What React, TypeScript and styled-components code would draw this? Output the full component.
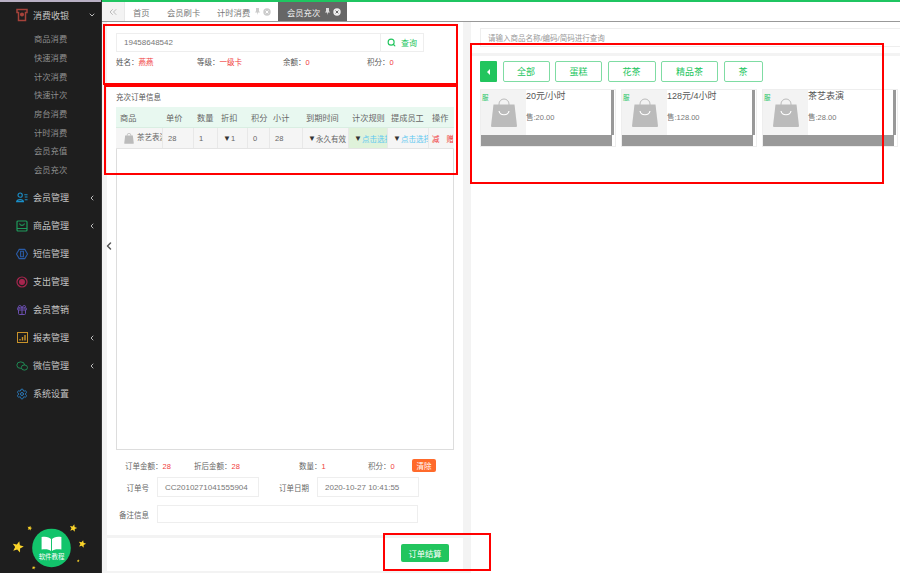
import styled, {createGlobalStyle} from "styled-components";
import {ChevronDown, ChevronLeft, ChevronsLeft, Gift, Search, Settings} from "lucide-react";

const GlobalStyle = createGlobalStyle`
    html, body {
        margin: 0;
        padding: 0;
        background: #fff;
    }

    * {
        box-sizing: border-box;
    }

    body {
        font-family: "Liberation Sans", "Noto Sans CJK SC", sans-serif;
        font-size: 8px;
        color: #555;
    }
`;

const Page = styled.div`
    position: relative;
    width: 900px;
    height: 573px;
    display: flex;
    overflow: hidden;
`;

const Sidebar = styled.aside`
    position: relative;
    width: 102px;
    flex: none;
    background: #1e1e1e;
    border-right: 1px solid #333;
    padding-top: 1px;
    display: flex;
    flex-direction: column;

    &::before {
        content: "";
        position: absolute;
        top: 0;
        left: 0;
        right: 0;
        height: 2px;
        background: #b9b0c4;
    }
`;

const NavRow = styled.div`
    height: 28px;
    flex: none;
    display: flex;
    align-items: center;
    padding-left: 16px;
    color: #c4c4c4;
    font-size: 9px;
    gap: 5px;
`;

const NavIcon = styled.span`
    width: 12px;
    height: 12px;
    flex: none;
    display: flex;
    align-items: center;
    justify-content: center;
`;

const NavLabel = styled.span`
    flex: 1;
`;

const NavArrow = styled.span`
    width: 16px;
    padding-left: 3px;
    display: flex;
    color: #bbb;
`;

const SubList = styled.div`
    display: flex;
    flex-direction: column;
    margin-bottom: 5.4px;
`;

const SubRow = styled.div`
    height: 18.7px;
    display: flex;
    align-items: center;
    padding-left: 34px;
    color: #8f8f8f;
    font-size: 8.3px;
`;

const Tutorial = styled.div`
    margin-top: auto;
    height: 63px;
    display: flex;
    justify-content: center;
`;

const Main = styled.main`
    flex: 1;
    min-width: 0;
    display: flex;
    flex-direction: column;
    border-top: 2px solid #1fc561;
`;

const TabBar = styled.div`
    height: 20px;
    flex: none;
    display: flex;
    align-items: center;
    background: #fff;
    border-bottom: 1px solid #999;
`;

const CollapseTab = styled.div`
    width: 23px;
    height: 100%;
    display: flex;
    align-items: center;
    justify-content: center;
    background: #f3f3f3;
    border-right: 1px solid #e8e8e8;
    color: #bbb;
    margin-right: 8px;
`;

const Tab = styled.div<{ $active?: boolean; $width: number }>`
    width: ${({$width}) => $width}px;
    height: 100%;
    flex: none;
    display: flex;
    align-items: center;
    gap: 3px;
    padding-left: ${({$active}) => ($active ? 9 : 0)}px;
    background: ${({$active}) => ($active ? "#666" : "transparent")};
    color: ${({$active}) => ($active ? "#f2f2f2" : "#777")};
    font-size: 8.3px;
`;

const TabLabel = styled.span`
    margin-right: 2px;
`;

const Content = styled.div`
    flex: 1;
    min-height: 0;
    display: flex;
`;

const LeftPane = styled.section`
    width: 369px;
    flex: none;
    position: relative;
    background: #f3f3f3;
    padding: 0 8px 2px 5px;
    display: flex;
    flex-direction: column;
    gap: 3px;
`;

const LeftCard = styled.div`
    flex: 1;
    min-height: 0;
    background: #fff;
    display: flex;
    flex-direction: column;
    padding: 11px 9px 0;
`;

const MemberSearch = styled.div`
    width: 308px;
    height: 19px;
    flex: none;
    display: flex;
    border: 1px solid #eee;
`;

const SearchText = styled.div`
    flex: 1;
    display: flex;
    align-items: center;
    padding-left: 7px;
    color: #777;
    font-size: 8px;
`;

const SearchButton = styled.div`
    width: 43px;
    display: flex;
    align-items: center;
    justify-content: center;
    gap: 5px;
    border-left: 1px solid #eee;
    color: #22c55e;
    font-size: 8px;
`;

const MemberInfo = styled.div`
    height: 17px;
    flex: none;
    display: grid;
    grid-template-columns: 81px 86px 84px 1fr;
    align-items: center;
    margin-top: 1px;
    font-size: 7.5px;
    color: #555;
`;

const Red = styled.span`
    color: #f03b3b;
`;

const SectionTitle = styled.div`
    margin-top: 18px;
    height: 16px;
    flex: none;
    display: flex;
    align-items: center;
    font-size: 7.5px;
    color: #555;
`;

const TableBox = styled.div`
    width: 338px;
    height: 343px;
    flex: none;
    margin-top: 3px;
    border: 1px solid #ddd;
    border-top: none;
`;

const GridRow = styled.div<{ $head?: boolean }>`
    display: grid;
    grid-template-columns: 46px 31px 24px 30px 22px 33px 46px 39px 41px 25px;
    height: 21px;
    background: ${({$head}) => ($head ? "#e8f8f0" : "#f5f5f5")};
    border-bottom: 1px solid ${({$head}) => ($head ? "#d9eee2" : "#e4e4e4")};
    margin: 0 -1px;
`;

const Cell = styled.div<{ $fill?: string; $head?: boolean }>`
    display: flex;
    align-items: center;
    min-width: 0;
    padding-left: ${({$head}) => ($head ? 4 : 5)}px;
    overflow: hidden;
    white-space: nowrap;
    background: ${({$fill}) => $fill ?? "transparent"};
    border-left: ${({$head}) => ($head ? "none" : "1px solid #e8e8e8")};
    font-size: ${({$head}) => ($head ? 8.2 : 7.5)}px;
    color: #666;
`;

const ProductCell = styled(Cell)`
    border-left: none;
    padding-left: 8px;
    gap: 3px;
    align-items: flex-start;
    padding-top: 3px;
`;

const ActionCell = styled(Cell)`
    padding-left: 3px;
`;

const RowBag = styled.svg`
    flex: none;
    margin-top: 2px;
`;

const Caret = styled.span`
    color: #333;
    font-size: 8px;
`;

const LinkText = styled.span`
    color: #5ec8f0;
`;

const ActionText = styled.span`
    color: #f03b3b;
    margin-right: 7px;
`;

const Totals = styled.div`
    width: 340px;
    height: 17px;
    flex: none;
    margin-top: 7px;
    display: grid;
    grid-template-columns: 69px 105px 69px 44px 1fr;
    padding-left: 9px;
    align-items: center;
    font-size: 7.5px;
    color: #666;
`;

const ClearButton = styled.span`
    width: 24px;
    height: 13px;
    display: flex;
    align-items: center;
    justify-content: center;
    background: #ff6a2b;
    color: #fff;
    border-radius: 2px;
    font-size: 7.5px;
`;

const FormRow = styled.div<{ $gap: number }>`
    flex: none;
    display: flex;
    align-items: center;
    margin-top: ${({$gap}) => $gap}px;
`;

const FormLabel = styled.span<{ $width: number }>`
    width: ${({$width}) => $width}px;
    flex: none;
    padding-right: 8px;
    text-align: right;
    font-size: 7.5px;
    color: #666;
`;

const FormInput = styled.div<{ $width: number; $height: number }>`
    width: ${({$width}) => $width}px;
    height: ${({$height}) => $height}px;
    flex: none;
    display: flex;
    align-items: center;
    padding-left: 7px;
    border: 1px solid #eee;
    font-size: 8px;
    color: #777;
`;

const FooterCard = styled.div`
    height: 33px;
    flex: none;
    background: #fff;
    display: flex;
    justify-content: flex-end;
    padding: 6px 14px 0 0;
`;

const SubmitButton = styled.div`
    width: 48px;
    height: 18px;
    display: flex;
    align-items: center;
    justify-content: center;
    background: #22c55e;
    color: #fff;
    border-radius: 2px;
    font-size: 8.3px;
`;

const SideHandle = styled.div`
    position: absolute;
    left: 1px;
    top: 218px;
    display: flex;
    color: #555;
`;

const RightPane = styled.section`
    flex: 1;
    min-width: 0;
    background: #fff;
    display: flex;
    flex-direction: column;
`;

const ProductSearchWrap = styled.div`
    height: 34px;
    flex: none;
    padding: 6px 0 0 9px;
    border-bottom: 3px solid #f3f3f3;
`;

const ProductSearch = styled.div`
    height: 19px;
    display: flex;
    align-items: center;
    padding-left: 7px;
    border: 1px solid #eee;
    border-right: none;
    color: #999;
    font-size: 7.5px;
`;

const CategoryBar = styled.div`
    height: 21px;
    flex: none;
    display: flex;
    gap: 5.5px;
    margin: 5px 0 7px 9px;
`;

const CategoryToggle = styled.div`
    width: 17px;
    display: flex;
    align-items: center;
    justify-content: center;
    background: #22c55e;
    border-radius: 1px;
`;

const Triangle = styled.span`
    border: 3px solid transparent;
    border-right-color: #fff;
    margin-left: -3px;
`;

const CategoryButton = styled.div<{ $width: number }>`
    width: ${({$width}) => $width}px;
    display: flex;
    align-items: center;
    justify-content: center;
    border: 1px solid #7fdca3;
    border-radius: 2px;
    color: #22c55e;
    font-size: 9px;
`;

const ProductGrid = styled.div`
    display: flex;
    gap: 5px;
    margin-left: 9px;
`;

const ProductCard = styled.div`
    width: 136px;
    height: 58px;
    flex: none;
    position: relative;
    display: flex;
    flex-direction: column;
    border: 1px solid #eee;
`;

const ProductBody = styled.div`
    height: 45px;
    flex: none;
    display: flex;
`;

const ProductImage = styled.div`
    width: 45px;
    flex: none;
    display: flex;
    align-items: center;
    justify-content: center;
    background: #f3f3f3;
`;

const ProductText = styled.div`
    flex: 1;
`;

const ProductName = styled.div`
    height: 13px;
    margin-bottom: 8px;
    font-size: 9px;
    line-height: 13px;
    color: #555;
`;

const ProductPrice = styled.div`
    font-size: 7.5px;
    line-height: 13px;
    color: #777;
`;

const ServiceTag = styled.span`
    position: absolute;
    left: 1px;
    top: 2px;
    font-size: 6.5px;
    color: #22c55e;
`;

const ScrollY = styled.div`
    position: absolute;
    right: 1px;
    top: 0;
    width: 3px;
    height: 45px;
    background: #999;
`;

const ScrollX = styled.div`
    width: 131px;
    height: 11px;
    background: #999;
`;

const Annotation = styled.div<{ $x: number; $y: number; $w: number; $h: number }>`
    position: absolute;
    left: ${({$x}) => $x}px;
    top: ${({$y}) => $y}px;
    width: ${({$w}) => $w}px;
    height: ${({$h}) => $h}px;
    border: 2px solid #f00;
    pointer-events: none;
`;

function CashIcon() {
    return (
        <svg width="12" height="14" viewBox="0 0 12 14" fill="none" stroke="#a5423a" strokeWidth="1.5">
            <path d="M1 1.500h10v3H9.500v8h-7v-8H1z" />
            <circle cx="6" cy="6.500" r="1.300" fill="#a5423a" />
        </svg>
    );
}

function UserIcon() {
    return (
        <svg width="13" height="11" viewBox="0 0 13 11" fill="none" stroke="#1a8fc9" strokeWidth="1.200">
            <circle cx="4.500" cy="3" r="2.300" />
            <path d="M.7 10c.4-3 7-3 7.400 0zM9 2.500h3.500M9.500 5h3M9.500 8h3" />
        </svg>
    );
}

function BoxIcon() {
    return (
        <svg width="12" height="12" viewBox="0 0 12 12" fill="none" stroke="#1f9a5c" strokeWidth="1.200">
            <rect x="1" y="1" width="10" height="10" rx="1" />
            <path d="M3.500 3.500c.5 2.500 4.500 2.500 5 0M1 8.500h10" />
        </svg>
    );
}

function HexIcon() {
    return (
        <svg width="13" height="12" viewBox="0 0 13 12" fill="none" stroke="#2a5ca8" strokeWidth="1.200">
            <path d="M3.500 1h6l3 5-3 5h-6L.5 6z" />
            <path d="M5 3h3v6H5z" />
        </svg>
    );
}

function CoinIcon() {
    return (
        <svg width="12" height="12" viewBox="0 0 12 12" fill="none" stroke="#a8264f" strokeWidth="1.200">
            <circle cx="6" cy="6" r="5" />
            <circle cx="6" cy="6" r="2.400" fill="#a8264f" />
        </svg>
    );
}

function ChartIcon() {
    return (
        <svg width="11" height="11" viewBox="0 0 11 11" fill="none" stroke="#c8922a" strokeWidth="1">
            <rect x=".5" y=".5" width="10" height="10" />
            <path d="M3 8.500V7M5.500 8.500V5M8 8.500V3" strokeWidth="1.400" />
        </svg>
    );
}

function WechatIcon() {
    return (
        <svg width="14" height="12" viewBox="0 0 14 12" fill="none" stroke="#1f9a5c" strokeWidth="1">
            <ellipse cx="5.500" cy="5" rx="4.500" ry="3.800" />
            <ellipse cx="9.800" cy="7.800" rx="3.600" ry="3" fill="#1e1e1e" />
        </svg>
    );
}

function TabPin({color}: { color: string }) {
    return (
        <svg width="5" height="7" viewBox="0 0 5 7" fill={color}>
            <path d="M1 0h3v3l1 1.500H3L2.500 7 2 4.500H0L1 3z" />
        </svg>
    );
}

function TabClose({color, mark}: { color: string; mark: string }) {
    return (
        <svg width="8" height="8" viewBox="0 0 8 8">
            <circle cx="4" cy="4" r="3.700" fill={color} />
            <path d="M2.600 2.600l2.800 2.800M5.400 2.600L2.600 5.400" stroke={mark} strokeWidth="1" />
        </svg>
    );
}

function BagIcon() {
    return (
        <svg width="26" height="30" viewBox="0 0 26 30">
            <path d="M8 8V6a5 5 0 0 1 10 0v2" fill="none" stroke="#bbb" strokeWidth="1" />
            <path d="M2.500 6.500h21L26 28a1 1 0 0 1-1 1H1a1 1 0 0 1-1-1z" fill="#bbb" />
            <path d="M8 13c1 5 9 5 10 0" fill="none" stroke="#fff" strokeWidth="1.200" />
        </svg>
    );
}

function TutorialBadge() {
    const stars = [
        {x: 18, y: 37, r: 6},
        {x: 30, y: 18, r: 2.600},
        {x: 34, y: 58, r: 2},
        {x: 74, y: 18, r: 4},
        {x: 83, y: 34, r: 4},
        {x: 79, y: 51, r: 1.500},
    ];
    return (
        <svg width="102" height="63" viewBox="0 0 102 63">
            {stars.map((s) => (
                <polygon
                    key={`${s.x}-${s.y}`}
                    fill="#fbd42a"
                    points={[0, 1, 2, 3, 4, 5, 6, 7, 8, 9]
                        .map((i) => {
                            const a = (Math.PI / 5) * i - Math.PI / 2 + 0.25;
                            const d = i % 2 === 0 ? s.r : s.r * 0.45;
                            return `${s.x + d * Math.cos(a)},${s.y + d * Math.sin(a)}`;
                        })
                        .join(" ")}
                />
            ))}
            <circle cx="52" cy="38" r="19.500" fill="#12c46b" />
            <path d="M42 27c4-1 8 0 9.500 2v12c-2-2-6-2-9.500-1.500zM62 27c-4-1-8 0-9.500 2v12c2-2 6-2 9.500-1.500z" fill="#fff" />
            <text x="52" y="49" textAnchor="middle" fontSize="6.500" fill="#fff">软件教程</text>
        </svg>
    );
}

const navAfter = [
    {label: "会员管理", icon: <UserIcon />, arrow: true},
    {label: "商品管理", icon: <BoxIcon />, arrow: true},
    {label: "短信管理", icon: <HexIcon />},
    {label: "支出管理", icon: <CoinIcon />},
    {label: "会员营销", icon: <Gift size={12} color="#6a4fb0" />},
    {label: "报表管理", icon: <ChartIcon />, arrow: true},
    {label: "微信管理", icon: <WechatIcon />, arrow: true},
    {label: "系统设置", icon: <Settings size={12} color="#2a78b8" />},
];

const subItems = ["商品消费", "快速消费", "计次消费", "快速计次", "房台消费", "计时消费", "会员充值", "会员充次"];
const categories = [
    {label: "全部", width: 47},
    {label: "蛋糕", width: 47},
    {label: "花茶", width: 48},
    {label: "精品茶", width: 57},
    {label: "茶", width: 39},
];
const products = [
    {name: "20元/小时", price: "售:20.00"},
    {name: "128元/4小时", price: "售:128.00"},
    {name: "茶艺表演", price: "售:28.00"},
];

export default function App() {
    return (
        <Page>
            <GlobalStyle />
            <Sidebar>
                <NavRow>
                    <NavIcon><CashIcon /></NavIcon>
                    <NavLabel>消费收银</NavLabel>
                    <NavArrow><ChevronDown size={8} strokeWidth={3} /></NavArrow>
                </NavRow>
                <SubList>
                    {subItems.map((item) => (
                        <SubRow key={item}>{item}</SubRow>
                    ))}
                </SubList>
                {navAfter.map((item) => (
                    <NavRow key={item.label}>
                        <NavIcon>{item.icon}</NavIcon>
                        <NavLabel>{item.label}</NavLabel>
                        {item.arrow && <NavArrow><ChevronLeft size={8} strokeWidth={3} /></NavArrow>}
                    </NavRow>
                ))}
                <Tutorial><TutorialBadge /></Tutorial>
            </Sidebar>
            <Main>
                <TabBar>
                    <CollapseTab><ChevronsLeft size={12} /></CollapseTab>
                    <Tab $width={34}>首页</Tab>
                    <Tab $width={50}>会员刷卡</Tab>
                    <Tab $width={61}>
                        <TabLabel>计时消费</TabLabel>
                        <TabPin color="#ccc" />
                        <TabClose color="#ccc" mark="#fff" />
                    </Tab>
                    <Tab $active $width={69}>
                        <TabLabel>会员充次</TabLabel>
                        <TabPin color="#ddd" />
                        <TabClose color="#eee" mark="#666" />
                    </Tab>
                </TabBar>
                <Content>
                    <LeftPane>
                        <SideHandle><ChevronLeft size={12} strokeWidth={3} /></SideHandle>
                        <LeftCard>
                            <MemberSearch>
                                <SearchText>19458648542</SearchText>
                                <SearchButton><Search size={9} strokeWidth={3} />查询</SearchButton>
                            </MemberSearch>
                            <MemberInfo>
                                <span>姓名：<Red>燕燕</Red></span>
                                <span>等级：<Red>一级卡</Red></span>
                                <span>余额：<Red>0</Red></span>
                                <span>积分：<Red>0</Red></span>
                            </MemberInfo>
                            <SectionTitle>充次订单信息</SectionTitle>
                            <TableBox>
                                <GridRow $head>
                                    {["商品", "单价", "数量", "折扣", "积分", "小计", "到期时间", "计次规则", "提成员工", "操作"].map((h) => (
                                        <Cell key={h} $head>{h}</Cell>
                                    ))}
                                </GridRow>
                                <GridRow>
                                    <ProductCell>
                                        <RowBag width="10" height="11" viewBox="0 0 26 30">
                                            <path d="M8 8V6a5 5 0 0 1 10 0v2" fill="none" stroke="#bbb" strokeWidth="2" />
                                            <path d="M2.500 6.500h21L26 28a1 1 0 0 1-1 1H1a1 1 0 0 1-1-1z" fill="#bbb" />
                                        </RowBag>
                                        茶艺表演
                                    </ProductCell>
                                    <Cell>28</Cell>
                                    <Cell>1</Cell>
                                    <Cell><Caret>▼</Caret>1</Cell>
                                    <Cell>0</Cell>
                                    <Cell>28</Cell>
                                    <Cell><Caret>▼</Caret>永久有效</Cell>
                                    <Cell $fill="#dff2da"><Caret>▼</Caret><LinkText>点击选择</LinkText></Cell>
                                    <Cell><Caret>▼</Caret><LinkText>点击选择</LinkText></Cell>
                                    <ActionCell><ActionText>减</ActionText><ActionText>赠</ActionText></ActionCell>
                                </GridRow>
                            </TableBox>
                            <Totals>
                                <span>订单金额：<Red>28</Red></span>
                                <span>折后金额：<Red>28</Red></span>
                                <span>数量：<Red>1</Red></span>
                                <span>积分：<Red>0</Red></span>
                                <ClearButton>清除</ClearButton>
                            </Totals>
                            <FormRow $gap={3}>
                                <FormLabel $width={41}>订单号</FormLabel>
                                <FormInput $width={102} $height={20}>CC2010271041555904</FormInput>
                                <FormLabel $width={58}>订单日期</FormLabel>
                                <FormInput $width={102} $height={20}>2020-10-27 10:41:55</FormInput>
                            </FormRow>
                            <FormRow $gap={8}>
                                <FormLabel $width={41}>备注信息</FormLabel>
                                <FormInput $width={261} $height={18} />
                            </FormRow>
                        </LeftCard>
                        <FooterCard><SubmitButton>订单结算</SubmitButton></FooterCard>
                    </LeftPane>
                    <RightPane>
                        <ProductSearchWrap>
                            <ProductSearch>请输入商品名称/编码/简码进行查询</ProductSearch>
                        </ProductSearchWrap>
                        <CategoryBar>
                            <CategoryToggle><Triangle /></CategoryToggle>
                            {categories.map((c) => (
                                <CategoryButton key={c.label} $width={c.width}>{c.label}</CategoryButton>
                            ))}
                        </CategoryBar>
                        <ProductGrid>
                            {products.map((p) => (
                                <ProductCard key={p.name}>
                                    <ServiceTag>服</ServiceTag>
                                    <ProductBody>
                                        <ProductImage><BagIcon /></ProductImage>
                                        <ProductText>
                                            <ProductName>{p.name}</ProductName>
                                            <ProductPrice>{p.price}</ProductPrice>
                                        </ProductText>
                                    </ProductBody>
                                    <ScrollY />
                                    <ScrollX />
                                </ProductCard>
                            ))}
                        </ProductGrid>
                    </RightPane>
                </Content>
            </Main>
            <Annotation $x={103} $y={24} $w={355} $h={61} />
            <Annotation $x={104} $y={85} $w={354} $h={90} />
            <Annotation $x={470} $y={43} $w={414} $h={141} />
            <Annotation $x={383} $y={533} $w={108} $h={38} />
        </Page>
    );
}
